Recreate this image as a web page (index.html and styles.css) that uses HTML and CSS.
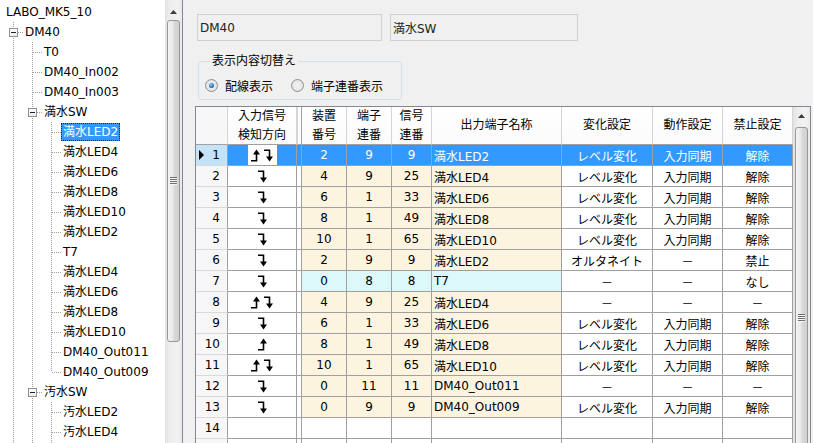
FILE: index.html
```html
<!DOCTYPE html>
<html lang="ja">
<head>
<meta charset="utf-8">
<title>LABO_MK5_10</title>
<link rel="stylesheet" href="styles.css">
</head>
<body>
<div class="app">
  <div class="tree">
    <div class="tree-body">
      <div class="node"><span class="lbl">LABO_MK5_10</span></div>
      <div class="node"><span class="g tee"><span class="box"></span></span><span class="lbl">DM40</span></div>
      <div class="node"><span class="g pipe"></span><span class="g tee"></span><span class="lbl">T0</span></div>
      <div class="node"><span class="g pipe"></span><span class="g tee"></span><span class="lbl">DM40_In002</span></div>
      <div class="node"><span class="g pipe"></span><span class="g tee"></span><span class="lbl">DM40_In003</span></div>
      <div class="node"><span class="g pipe"></span><span class="g tee"><span class="box"></span></span><span class="lbl">満水SW</span></div>
      <div class="node"><span class="g pipe"></span><span class="g pipe"></span><span class="g tee"></span><span class="lbl sel">満水LED2</span></div>
      <div class="node"><span class="g pipe"></span><span class="g pipe"></span><span class="g tee"></span><span class="lbl">満水LED4</span></div>
      <div class="node"><span class="g pipe"></span><span class="g pipe"></span><span class="g tee"></span><span class="lbl">満水LED6</span></div>
      <div class="node"><span class="g pipe"></span><span class="g pipe"></span><span class="g tee"></span><span class="lbl">満水LED8</span></div>
      <div class="node"><span class="g pipe"></span><span class="g pipe"></span><span class="g tee"></span><span class="lbl">満水LED10</span></div>
      <div class="node"><span class="g pipe"></span><span class="g pipe"></span><span class="g tee"></span><span class="lbl">満水LED2</span></div>
      <div class="node"><span class="g pipe"></span><span class="g pipe"></span><span class="g tee"></span><span class="lbl">T7</span></div>
      <div class="node"><span class="g pipe"></span><span class="g pipe"></span><span class="g tee"></span><span class="lbl">満水LED4</span></div>
      <div class="node"><span class="g pipe"></span><span class="g pipe"></span><span class="g tee"></span><span class="lbl">満水LED6</span></div>
      <div class="node"><span class="g pipe"></span><span class="g pipe"></span><span class="g tee"></span><span class="lbl">満水LED8</span></div>
      <div class="node"><span class="g pipe"></span><span class="g pipe"></span><span class="g tee"></span><span class="lbl">満水LED10</span></div>
      <div class="node"><span class="g pipe"></span><span class="g pipe"></span><span class="g tee"></span><span class="lbl">DM40_Out011</span></div>
      <div class="node"><span class="g pipe"></span><span class="g pipe"></span><span class="g ell"></span><span class="lbl">DM40_Out009</span></div>
      <div class="node"><span class="g pipe"></span><span class="g tee"><span class="box"></span></span><span class="lbl">汚水SW</span></div>
      <div class="node"><span class="g pipe"></span><span class="g pipe"></span><span class="g tee"></span><span class="lbl">汚水LED2</span></div>
      <div class="node"><span class="g pipe"></span><span class="g pipe"></span><span class="g tee"></span><span class="lbl">汚水LED4</span></div>
      <div class="node"><span class="g pipe"></span><span class="g pipe"></span><span class="g pipe"></span></div>
    </div>
    <div class="vscroll">
      <div class="sbtn tbtn"><svg width="7" height="4" viewBox="0 0 7 4"><polygon points="0,4 7,4 3.5,0"/></svg></div>
      <div class="thumb tree-thumb"><span class="grip"></span></div>
    </div>
  </div>

  <div class="main">
    <div class="fields">
      <div class="field f1">DM40</div>
      <div class="field f2">満水SW</div>
    </div>
    <fieldset class="group">
      <legend>表示内容切替え</legend>
      <div class="opts">
        <span class="opt"><span class="radio on"></span>配線表示</span>
        <span class="opt"><span class="radio"></span>端子連番表示</span>
      </div>
    </fieldset>

    <div class="gridbox">
      <div class="grid">
        <div class="c h rh0"></div>
        <div class="c h">入力信号<br>検知方向</div>
        <div class="c h sp"></div>
        <div class="c h">装置<br>番号</div>
        <div class="c h">端子<br>連番</div>
        <div class="c h">信号<br>連番</div>
        <div class="c h">出力端子名称</div>
        <div class="c h">変化設定</div>
        <div class="c h">動作設定</div>
        <div class="c h">禁止設定</div>

        <div class="c rh cur"><span class="tri"></span>1</div>
        <div class="c i s"><span class="ico"><svg class="ar" width="9" height="13" viewBox="0 0 9 13"><path d="M0 11.7H5.5V4"/><polygon points="2,5.5 9,5.5 5.5,0.5"/></svg><svg class="ar" width="9" height="13" viewBox="0 0 9 13"><path d="M0 1.3H5.5V9"/><polygon points="2,7.5 9,7.5 5.5,12.5"/></svg></span></div>
        <div class="c sp s"></div>
        <div class="c r s">2</div><div class="c r s">9</div><div class="c r s">9</div>
        <div class="c r nm s">満水LED2</div>
        <div class="c s">レベル変化</div><div class="c s">入力同期</div><div class="c s">解除</div>

        <div class="c rh">2</div>
        <div class="c i"><span class="ico"><svg class="ar" width="9" height="13" viewBox="0 0 9 13"><path d="M0 1.3H5.5V9"/><polygon points="2,7.5 9,7.5 5.5,12.5"/></svg></span></div>
        <div class="c sp"></div>
        <div class="c r">4</div><div class="c r">9</div><div class="c r">25</div>
        <div class="c r nm">満水LED4</div>
        <div class="c">レベル変化</div><div class="c">入力同期</div><div class="c">解除</div>

        <div class="c rh">3</div>
        <div class="c i"><span class="ico"><svg class="ar" width="9" height="13" viewBox="0 0 9 13"><path d="M0 1.3H5.5V9"/><polygon points="2,7.5 9,7.5 5.5,12.5"/></svg></span></div>
        <div class="c sp"></div>
        <div class="c r">6</div><div class="c r">1</div><div class="c r">33</div>
        <div class="c r nm">満水LED6</div>
        <div class="c">レベル変化</div><div class="c">入力同期</div><div class="c">解除</div>

        <div class="c rh">4</div>
        <div class="c i"><span class="ico"><svg class="ar" width="9" height="13" viewBox="0 0 9 13"><path d="M0 1.3H5.5V9"/><polygon points="2,7.5 9,7.5 5.5,12.5"/></svg></span></div>
        <div class="c sp"></div>
        <div class="c r">8</div><div class="c r">1</div><div class="c r">49</div>
        <div class="c r nm">満水LED8</div>
        <div class="c">レベル変化</div><div class="c">入力同期</div><div class="c">解除</div>

        <div class="c rh">5</div>
        <div class="c i"><span class="ico"><svg class="ar" width="9" height="13" viewBox="0 0 9 13"><path d="M0 1.3H5.5V9"/><polygon points="2,7.5 9,7.5 5.5,12.5"/></svg></span></div>
        <div class="c sp"></div>
        <div class="c r">10</div><div class="c r">1</div><div class="c r">65</div>
        <div class="c r nm">満水LED10</div>
        <div class="c">レベル変化</div><div class="c">入力同期</div><div class="c">解除</div>

        <div class="c rh">6</div>
        <div class="c i"><span class="ico"><svg class="ar" width="9" height="13" viewBox="0 0 9 13"><path d="M0 1.3H5.5V9"/><polygon points="2,7.5 9,7.5 5.5,12.5"/></svg></span></div>
        <div class="c sp"></div>
        <div class="c r">2</div><div class="c r">9</div><div class="c r">9</div>
        <div class="c r nm">満水LED2</div>
        <div class="c">オルタネイト</div><div class="c">－</div><div class="c">禁止</div>

        <div class="c rh">7</div>
        <div class="c i"><span class="ico"><svg class="ar" width="9" height="13" viewBox="0 0 9 13"><path d="M0 1.3H5.5V9"/><polygon points="2,7.5 9,7.5 5.5,12.5"/></svg></span></div>
        <div class="c sp"></div>
        <div class="c y">0</div><div class="c y">8</div><div class="c y">8</div>
        <div class="c y nm">T7</div>
        <div class="c">－</div><div class="c">－</div><div class="c">なし</div>

        <div class="c rh">8</div>
        <div class="c i"><span class="ico"><svg class="ar" width="9" height="13" viewBox="0 0 9 13"><path d="M0 11.7H5.5V4"/><polygon points="2,5.5 9,5.5 5.5,0.5"/></svg><svg class="ar" width="9" height="13" viewBox="0 0 9 13"><path d="M0 1.3H5.5V9"/><polygon points="2,7.5 9,7.5 5.5,12.5"/></svg></span></div>
        <div class="c sp"></div>
        <div class="c r">4</div><div class="c r">9</div><div class="c r">25</div>
        <div class="c r nm">満水LED4</div>
        <div class="c">－</div><div class="c">－</div><div class="c">－</div>

        <div class="c rh">9</div>
        <div class="c i"><span class="ico"><svg class="ar" width="9" height="13" viewBox="0 0 9 13"><path d="M0 1.3H5.5V9"/><polygon points="2,7.5 9,7.5 5.5,12.5"/></svg></span></div>
        <div class="c sp"></div>
        <div class="c r">6</div><div class="c r">1</div><div class="c r">33</div>
        <div class="c r nm">満水LED6</div>
        <div class="c">レベル変化</div><div class="c">入力同期</div><div class="c">解除</div>

        <div class="c rh">10</div>
        <div class="c i"><span class="ico"><svg class="ar" width="9" height="13" viewBox="0 0 9 13"><path d="M0 11.7H5.5V4"/><polygon points="2,5.5 9,5.5 5.5,0.5"/></svg></span></div>
        <div class="c sp"></div>
        <div class="c r">8</div><div class="c r">1</div><div class="c r">49</div>
        <div class="c r nm">満水LED8</div>
        <div class="c">レベル変化</div><div class="c">入力同期</div><div class="c">解除</div>

        <div class="c rh">11</div>
        <div class="c i"><span class="ico"><svg class="ar" width="9" height="13" viewBox="0 0 9 13"><path d="M0 11.7H5.5V4"/><polygon points="2,5.5 9,5.5 5.5,0.5"/></svg><svg class="ar" width="9" height="13" viewBox="0 0 9 13"><path d="M0 1.3H5.5V9"/><polygon points="2,7.5 9,7.5 5.5,12.5"/></svg></span></div>
        <div class="c sp"></div>
        <div class="c r">10</div><div class="c r">1</div><div class="c r">65</div>
        <div class="c r nm">満水LED10</div>
        <div class="c">レベル変化</div><div class="c">入力同期</div><div class="c">解除</div>

        <div class="c rh">12</div>
        <div class="c i"><span class="ico"><svg class="ar" width="9" height="13" viewBox="0 0 9 13"><path d="M0 1.3H5.5V9"/><polygon points="2,7.5 9,7.5 5.5,12.5"/></svg></span></div>
        <div class="c sp"></div>
        <div class="c r">0</div><div class="c r">11</div><div class="c r">11</div>
        <div class="c r nm">DM40_Out011</div>
        <div class="c">－</div><div class="c">－</div><div class="c">－</div>

        <div class="c rh">13</div>
        <div class="c i"><span class="ico"><svg class="ar" width="9" height="13" viewBox="0 0 9 13"><path d="M0 1.3H5.5V9"/><polygon points="2,7.5 9,7.5 5.5,12.5"/></svg></span></div>
        <div class="c sp"></div>
        <div class="c r">0</div><div class="c r">9</div><div class="c r">9</div>
        <div class="c r nm">DM40_Out009</div>
        <div class="c">レベル変化</div><div class="c">入力同期</div><div class="c">解除</div>

        <div class="c rh">14</div>
        <div class="c i"></div><div class="c sp"></div>
        <div class="c"></div><div class="c"></div><div class="c"></div><div class="c"></div>
        <div class="c"></div><div class="c"></div><div class="c"></div>

        <div class="c rh"></div>
        <div class="c i"></div><div class="c sp"></div>
        <div class="c"></div><div class="c"></div><div class="c"></div><div class="c"></div>
        <div class="c"></div><div class="c"></div><div class="c"></div>
      </div>
      <div class="vscroll gscroll">
        <div class="sbtn"><svg width="7" height="4" viewBox="0 0 7 4"><polygon points="0,4 7,4 3.5,0"/></svg></div>
        <div class="thumb grid-thumb"><span class="grip"></span></div>
      </div>
    </div>
  </div>
</div>
</body>
</html>
```

FILE: styles.css
```css
html, body {
  margin: 0;
  padding: 0;
  height: 443px;
  overflow: hidden;
}
body {
  background: #f0f0f0;
  font-family: "DejaVu Sans", "Noto Sans CJK JP", sans-serif;
  font-size: 12px;
  color: #000;
  --dv: repeating-linear-gradient(to bottom, #a0a0a0 0 1px, transparent 1px 2px);
  --dh: repeating-linear-gradient(to right, #a0a0a0 0 1px, transparent 1px 2px);
}
.app {
  display: flex;
  height: 443px;
}

/* ---------- tree ---------- */
.tree {
  width: 183px;
  flex: none;
  box-sizing: border-box;
  border-right: 1px solid #828790;
  background: #fff;
  display: flex;
  height: 520px;
}
.tree-body {
  flex: 1;
  padding-top: 2px;
  overflow: hidden;
}
.node {
  display: flex;
  align-items: center;
  height: 20px;
  padding-left: 4px;
  white-space: nowrap;
}
.g {
  flex: none;
  width: 19px;
  height: 20px;
  display: flex;
  align-items: center;
}
.pipe {
  background: var(--dv) 9px 0 / 1px 100% no-repeat;
}
.tee {
  background: var(--dh) 10px 10px / 9px 1px no-repeat, var(--dv) 9px 0 / 1px 100% no-repeat;
}
.ell {
  background: var(--dh) 10px 10px / 9px 1px no-repeat, var(--dv) 9px 0 / 1px 10px no-repeat;
}
.box {
  width: 9px;
  height: 9px;
  box-sizing: border-box;
  margin-left: 5px;
  border: 1px solid #919191;
  background: linear-gradient(#fff, #ececec);
  display: flex;
  align-items: center;
  justify-content: center;
}
.box::before {
  content: "";
  width: 5px;
  height: 1px;
  background: #222;
}
.lbl {
  padding: 1px 2px;
  line-height: 16px;
}
.lbl.sel {
  background: #3399ff;
  color: #fff;
  outline: 1px dotted #0b2a55;
  outline-offset: -1px;
}

/* ---------- scrollbars ---------- */
.vscroll {
  width: 17px;
  flex: none;
  display: flex;
  flex-direction: column;
  align-items: center;
  background: linear-gradient(to right, #e2e2e2, #ececec 25%, #f2f2f2 75%, #e8e8e8);
}
.sbtn {
  width: 17px;
  height: 17px;
  flex: none;
  display: flex;
  align-items: center;
  justify-content: center;
}
.tbtn {
  height: 20px;
  box-sizing: border-box;
  padding-top: 4px;
}
.sbtn svg polygon {
  fill: #3c3c3c;
}
.thumb {
  width: 13px;
  flex: none;
  margin-top: 3px;
  box-sizing: border-box;
  border: 1px solid #979797;
  border-radius: 3px;
  background: linear-gradient(to right, #f4f4f4, #e8e8e8 45%, #d9d9d9 55%, #d0d0d0);
  display: flex;
  align-items: center;
  justify-content: center;
}
.tree-thumb {
  height: 322px;
  margin-top: 0;
}
.grid-thumb {
  height: 382px;
}
.grip {
  width: 7px;
  height: 8px;
  background: repeating-linear-gradient(to bottom, #6f6f6f 0 1px, #f6f6f6 1px 2px);
}

/* ---------- main ---------- */
.main {
  flex: 1;
  padding: 14px 0 0 12px;
}
.fields {
  display: flex;
  gap: 8px;
  margin-left: 2px;
}
.field {
  height: 27px;
  box-sizing: border-box;
  border: 1px solid #d0d0d0;
  background: #f0f0f0;
  padding-left: 2px;
  display: flex;
  align-items: center;
  color: #222;
}
.f1 { width: 185px; }
.f2 { width: 188px; }

.group {
  width: 204px;
  box-sizing: border-box;
  margin: 12px 0 0 3px;
  padding: 8px 0 6px 6px;
  border: 1px solid #d5dfe5;
  border-radius: 3px;
}
.group legend {
  margin-left: 5px;
  padding: 0 2px;
  line-height: 16px;
}
.opts {
  display: flex;
  height: 16px;
  align-items: center;
}
.opt {
  display: flex;
  align-items: center;
  margin-right: 18px;
}
.radio {
  width: 13px;
  height: 13px;
  box-sizing: border-box;
  border-radius: 50%;
  border: 1px solid #8e8f8f;
  background: radial-gradient(circle at 50% 50%, #f4f4f4 0, #e6e6e6 60%, #d4d4d4 100%);
  margin-right: 7px;
  display: flex;
  align-items: center;
  justify-content: center;
}
.radio.on::after {
  content: "";
  width: 5px;
  height: 5px;
  border-radius: 50%;
  background: radial-gradient(circle at 40% 35%, #8fd3ff 0, #2a79c4 55%, #0d3f78 100%);
}

/* ---------- grid ---------- */
.gridbox {
  margin-top: 6px;
  width: 616px;
  height: 420px;
  box-sizing: border-box;
  border: 1px solid #828790;
  border-bottom: 0;
  background: #fff;
  display: flex;
}
.grid {
  display: grid;
  grid-template-columns: 32px 69px 5px 45px 45px 40px 130px 91px 70px 70px;
  grid-template-rows: 38px;
  grid-auto-rows: 21px;
  align-content: start;
}
.c {
  box-sizing: border-box;
  border-right: 1px solid #a0a0a0;
  border-bottom: 1px solid #a0a0a0;
  display: flex;
  align-items: center;
  justify-content: center;
  white-space: nowrap;
  overflow: hidden;
  background: #fff;
}
.h {
  text-align: center;
  line-height: 19px;
  border-right-color: #d5d5d5;
  background: linear-gradient(#ffffff, #fbfbfb);
}
.h.sp {
  border-right-color: #a0a0a0;
  border-left: 1px solid #d5d5d5;
}
.rh0 {
  background: #f7f7f7;
}
.rh {
  background: #f7f7f7;
  justify-content: flex-end;
  padding-right: 7px;
  border-bottom-color: #d9d9d9;
}
.rh.cur {
  background: #c4e3f9;
}
.tri {
  margin-right: auto;
  margin-left: 3px;
  width: 0;
  height: 0;
  border-left: 5px solid #000;
  border-top: 5px solid transparent;
  border-bottom: 5px solid transparent;
}
.sp {
  border-right-color: #a0a0a0;
}
.r {
  background: #fdf4e0;
}
.y {
  background: #dcf8fb;
}
.nm {
  justify-content: flex-start;
  padding-left: 2px;
}
.s {
  background: #3399ff;
  color: #fff;
}
.ico {
  width: 29px;
  height: 20px;
  background: #fff;
  display: flex;
  align-items: center;
  justify-content: center;
  gap: 4px;
}
.ar path {
  fill: none;
  stroke: #000;
  stroke-width: 1.6;
}
.ar polygon {
  fill: #000;
}
.gscroll {
  height: 100%;
}
```
